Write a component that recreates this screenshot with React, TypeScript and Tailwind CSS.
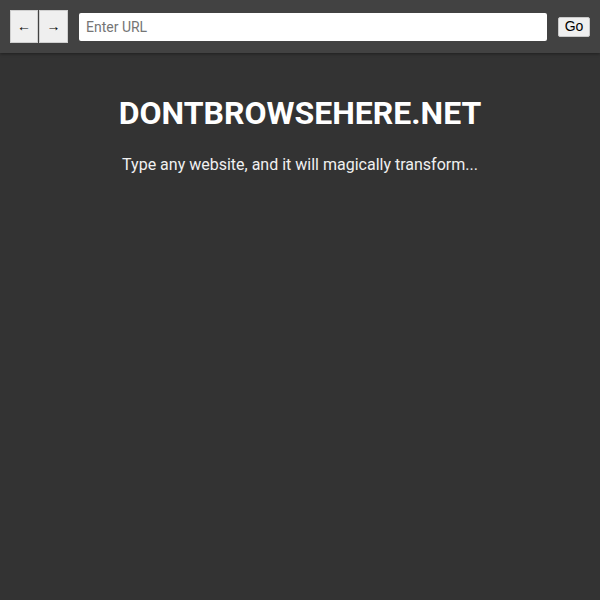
export default function App() {
  return (
    <div className="w-[600px] h-[600px] bg-[#333333] flex flex-col" style={{ fontFamily: 'Roboto, "Liberation Sans", sans-serif' }}>
      <div className="h-[53px] bg-[#424242] flex items-center px-[10px] shadow-[0_1px_3px_rgba(0,0,0,0.4)]">
        <div className="flex gap-px">
          <button className="w-[28px] h-[33px] bg-[#efefef] border border-[#cfcfcf] text-[14px] text-black flex items-center justify-center">←</button>
          <button className="w-[29px] h-[33px] bg-[#efefef] border border-[#cfcfcf] text-[14px] text-black flex items-center justify-center">→</button>
        </div>
        <input
          className="ml-[11px] flex-1 h-[28px] bg-white rounded-[2px] px-[7px] text-[14px] text-black placeholder:text-[#757575] outline-none"
          placeholder="Enter URL"
        />
        <button className="ml-[11px] w-[32px] h-[20px] bg-[#efefef] border border-[#c8c8c8] rounded-[2px] text-[14px] text-black flex items-center justify-center" style={{ fontFamily: '"Liberation Sans", Arial, sans-serif' }}>Go</button>
      </div>
      <div className="flex flex-col items-center pt-[40px] text-white">
        <h1 className="text-[32px] font-bold leading-[40px]">DONTBROWSEHERE.NET</h1>
        <p className="mt-[20px] text-[16px] leading-[24px] text-[#f0f0f0]">Type any website, and it will magically transform...</p>
      </div>
    </div>
  );
}
